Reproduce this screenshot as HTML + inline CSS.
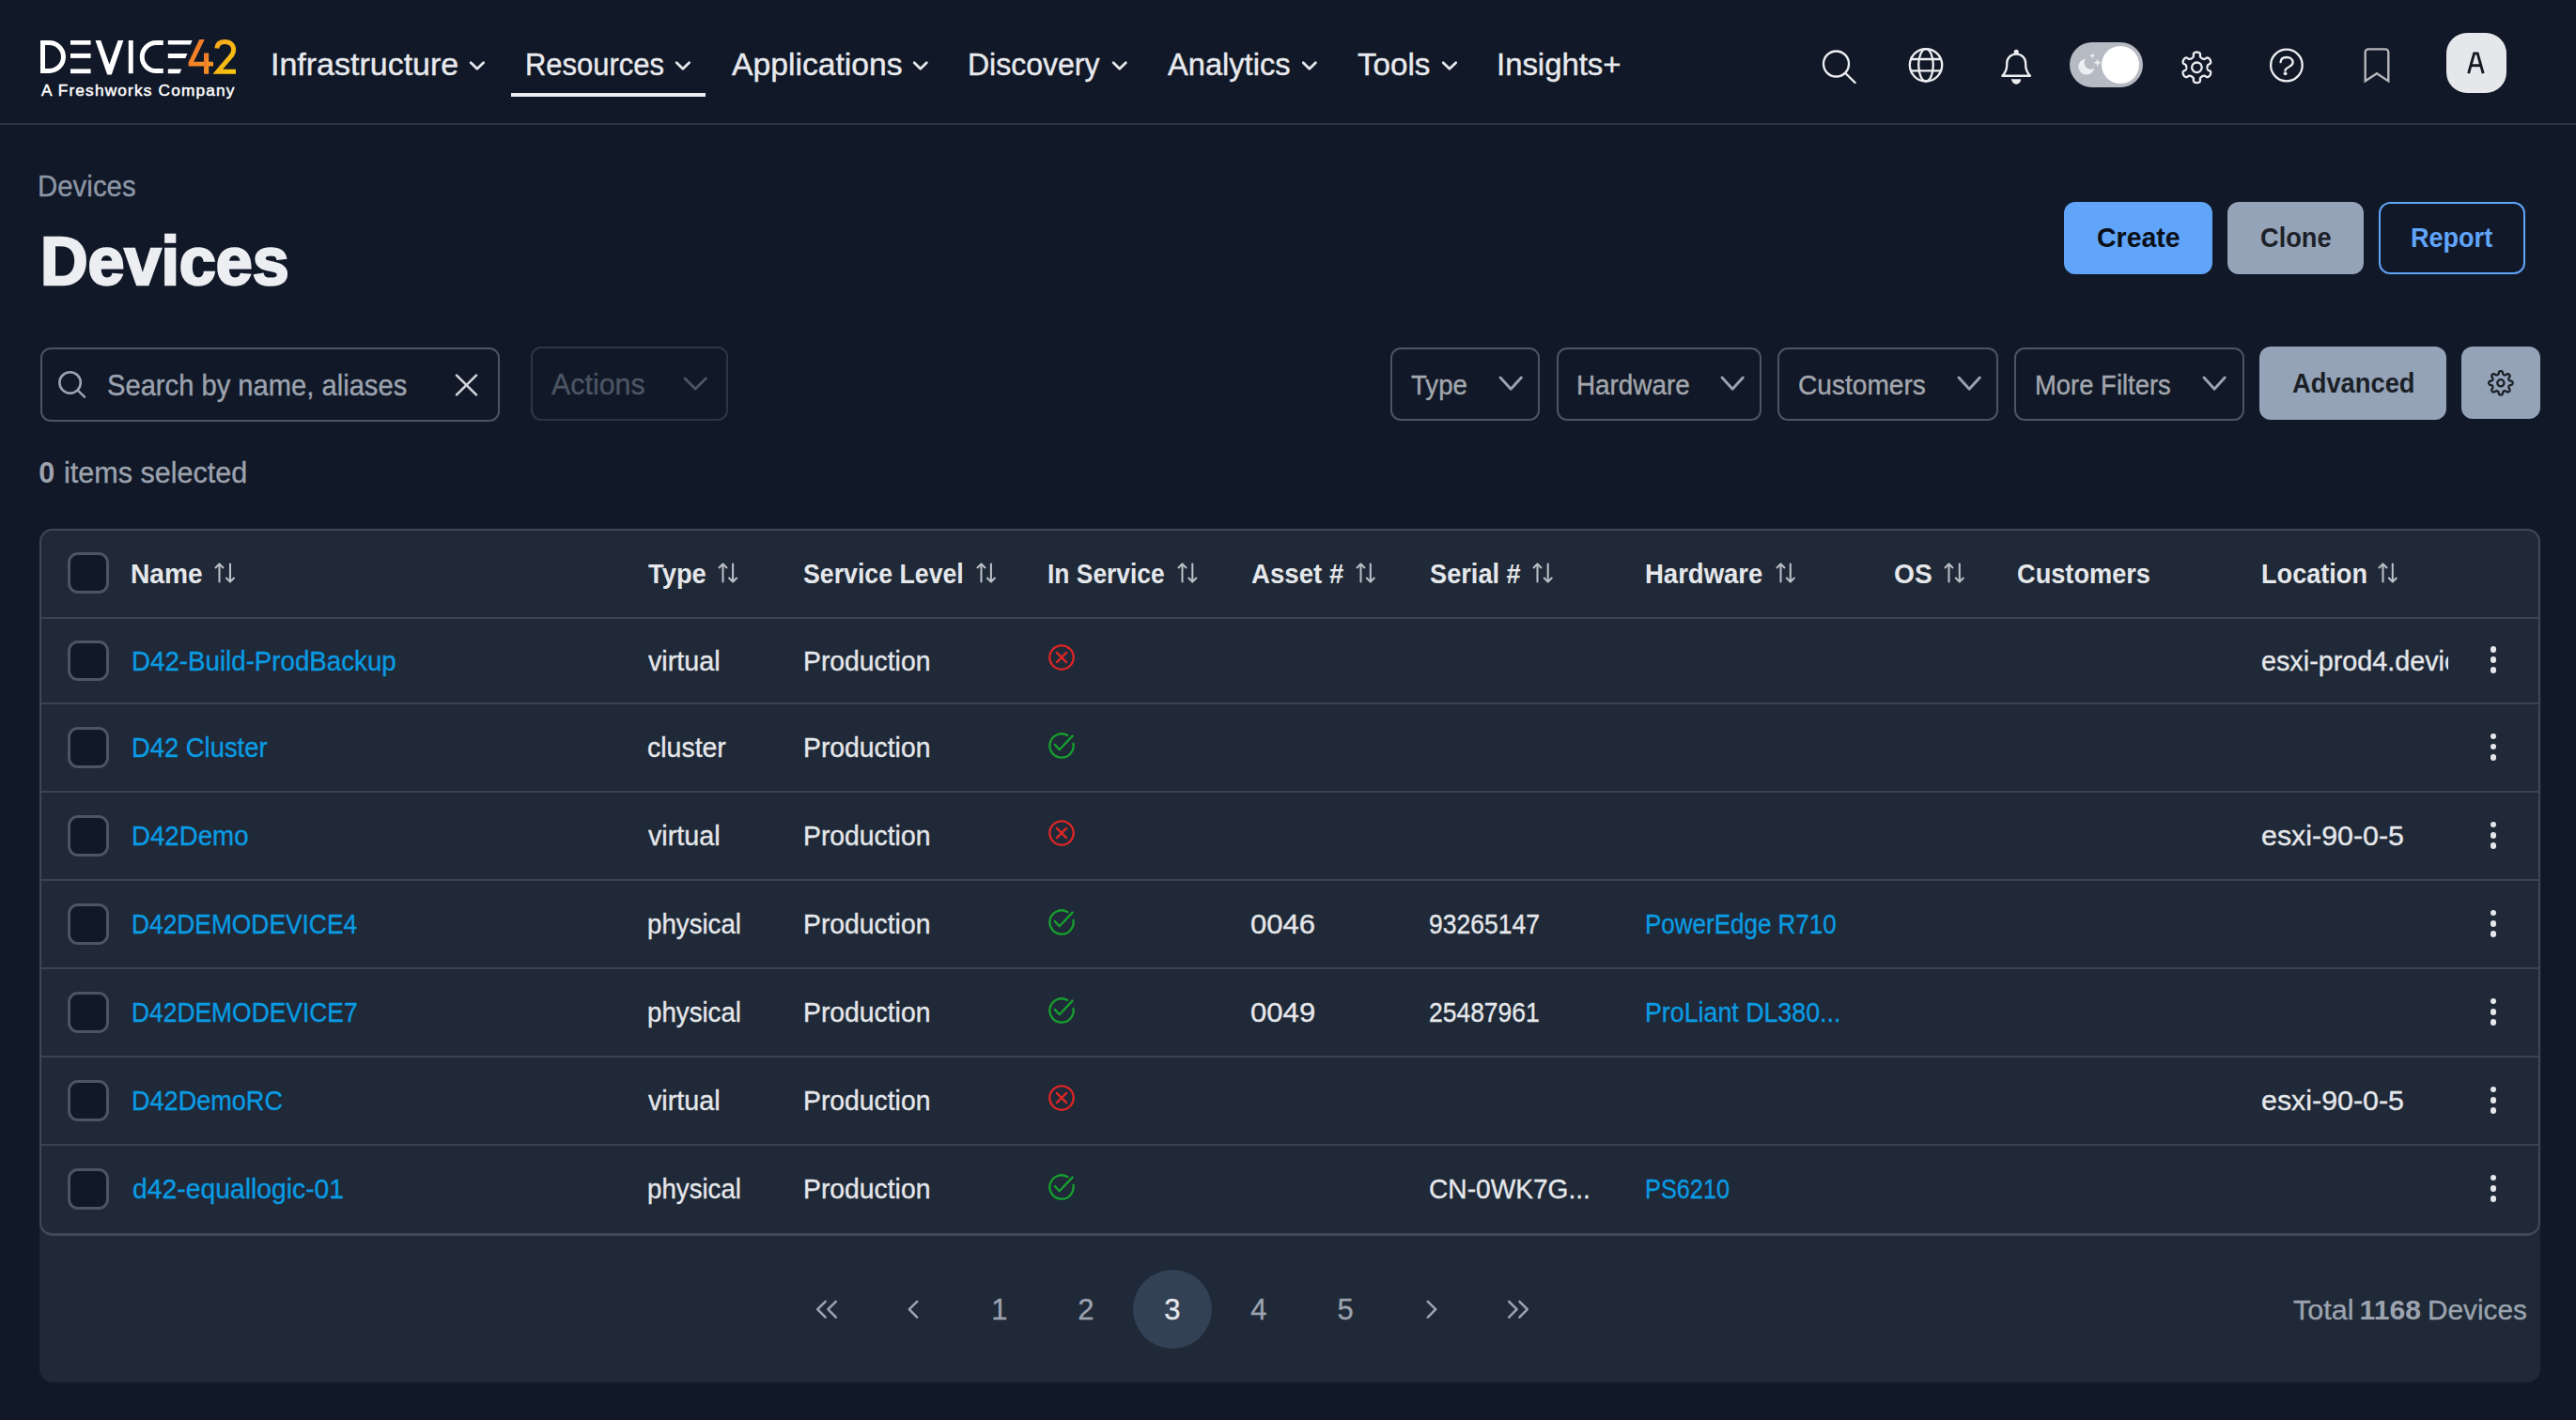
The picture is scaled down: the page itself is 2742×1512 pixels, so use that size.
<!DOCTYPE html><html><head><meta charset="utf-8"><title>Devices</title><style>html,body{margin:0;padding:0;}body{width:2742px;height:1512px;overflow:hidden;background:#111827;position:relative;font-family:"Liberation Sans",sans-serif;}.t{position:absolute;white-space:nowrap;line-height:1;transform-origin:0 0;}</style></head><body>
<div style="position:absolute;left:0;top:131px;width:2742px;height:2px;background:#2c3340"></div>
<svg style="position:absolute;left:0;top:0" width="300" height="120" viewBox="0 0 300 120">
<defs>
<linearGradient id="g4" x1="0" y1="0" x2="1" y2="1"><stop offset="0" stop-color="#ef6f2a"/><stop offset="1" stop-color="#f59a23"/></linearGradient>
<linearGradient id="g2" x1="0" y1="0" x2="1" y2="1"><stop offset="0" stop-color="#f6a91c"/><stop offset="1" stop-color="#f8c70f"/></linearGradient>
</defs>
<g fill="#ffffff">
<path d="M45.5,45.5 H52.5 A15,15 0 0 1 52.5,75.5 H45.5 Z" fill="none" stroke="#fff" stroke-width="5"/>
<rect x="75" y="43" width="21.6" height="4.7"/>
<rect x="75" y="56.9" width="21.6" height="5"/>
<rect x="75" y="73.4" width="21.6" height="4.8"/>
<polygon points="101.5,43 107.3,43 116.4,68.5 125.6,43 131.4,43 118.8,79.5 114.2,79.5"/>
<rect x="136.8" y="43" width="4.9" height="35.2"/>
<path d="M173.8,45.5 H166.3 A15,15 0 0 0 166.3,75.6 H173.8" fill="none" stroke="#fff" stroke-width="5"/>
<polygon points="178.8,43 204.6,43 202.8,47.6 178.8,47.6"/>
<polygon points="178.8,56.9 199.4,56.9 197.4,62 178.8,62"/>
<polygon points="178.8,73.4 193.2,73.4 191.3,78.2 178.8,78.2"/>
</g>
<g fill="url(#g4)">
<polygon points="212.2,42 217.8,42 206.2,65.8 227,65.8 227,70.6 200.6,70.6 200.6,66.5"/>
<rect x="217" y="56.5" width="5.2" height="22.2"/>
</g>
<path d="M230.8,51.5 C231.2,46.5 235,44.5 239.6,44.5 C245,44.5 248.6,48 248.6,53 C248.6,56.8 246.8,59.2 243.6,62.4 L231.8,76.2 H251" fill="none" stroke="url(#g2)" stroke-width="5" stroke-linejoin="miter"/>
</svg>
<svg style="position:absolute;left:498.6px;top:64px" width="17.799999999999955" height="13" viewBox="498.6 64 17.799999999999955 13"><polyline points="500.8,66.8 507.5,73.2 514.1999999999999,66.8" fill="none" stroke="#e5e7eb" stroke-width="2.8" stroke-linecap="round" stroke-linejoin="round"/></svg>
<svg style="position:absolute;left:718.3px;top:64px" width="17.800000000000068" height="13" viewBox="718.3 64 17.800000000000068 13"><polyline points="720.5,66.8 727.2,73.2 733.9,66.8" fill="none" stroke="#e5e7eb" stroke-width="2.8" stroke-linecap="round" stroke-linejoin="round"/></svg>
<svg style="position:absolute;left:971.3px;top:64px" width="17.5" height="13" viewBox="971.3 64 17.5 13"><polyline points="973.5,66.8 980.05,73.2 986.5999999999999,66.8" fill="none" stroke="#e5e7eb" stroke-width="2.8" stroke-linecap="round" stroke-linejoin="round"/></svg>
<svg style="position:absolute;left:1182.9px;top:64px" width="17.5" height="13" viewBox="1182.9 64 17.5 13"><polyline points="1185.1000000000001,66.8 1191.65,73.2 1198.2,66.8" fill="none" stroke="#e5e7eb" stroke-width="2.8" stroke-linecap="round" stroke-linejoin="round"/></svg>
<svg style="position:absolute;left:1385.0px;top:64px" width="17.59999999999991" height="13" viewBox="1385.0 64 17.59999999999991 13"><polyline points="1387.2,66.8 1393.8,73.2 1400.3999999999999,66.8" fill="none" stroke="#e5e7eb" stroke-width="2.8" stroke-linecap="round" stroke-linejoin="round"/></svg>
<svg style="position:absolute;left:1533.9px;top:64px" width="17.899999999999864" height="13" viewBox="1533.9 64 17.899999999999864 13"><polyline points="1536.1000000000001,66.8 1542.85,73.2 1549.6,66.8" fill="none" stroke="#e5e7eb" stroke-width="2.8" stroke-linecap="round" stroke-linejoin="round"/></svg>
<div style="position:absolute;left:544px;top:99px;width:207px;height:4px;background:#eceef2"></div>
<svg style="position:absolute;left:1900px;top:20px" width="842" height="100" viewBox="1900 20 842 100" fill="none" stroke="#eceef1" stroke-width="2.35" stroke-linecap="round" stroke-linejoin="round">
<circle cx="1954.5" cy="68" r="13.5"/>
<line x1="1964.4" y1="78" x2="1974.6" y2="88"/>
<circle cx="2050" cy="69.3" r="17.2"/>
<ellipse cx="2050" cy="69.3" rx="7.8" ry="17.2"/>
<line x1="2034.2" y1="63" x2="2065.8" y2="63"/>
<line x1="2034.2" y1="75.4" x2="2065.8" y2="75.4"/>
<path d="M2131.4,80.7 C2134.6,77.4 2136.2,74 2136.2,69.2 V67.4 C2136.2,61.6 2140.5,57.6 2146.2,57.6 C2151.9,57.6 2156.2,61.6 2156.2,67.4 V69.2 C2156.2,74 2157.8,77.4 2161,80.7 Z"/>
<circle cx="2146.2" cy="55.2" r="1.4" fill="#eceef1"/>
<path d="M2141.6,84.7 H2150.8 A4.6,4.6 0 0 1 2141.6,84.7 Z" fill="#eceef1" stroke-width="0.8"/>
<path d="M2349.50,71.80 L2349.51,72.09 L2349.53,72.38 L2349.57,72.68 L2349.62,72.98 L2349.70,73.29 L2349.80,73.61 L2349.93,73.94 L2350.11,74.29 L2350.40,74.68 L2351.63,75.35 L2352.84,76.08 L2353.07,76.57 L2353.17,77.03 L2353.21,77.48 L2353.18,77.92 L2353.12,78.35 L2353.02,78.77 L2352.88,79.18 L2352.71,79.57 L2352.52,79.95 L2352.29,80.31 L2352.03,80.65 L2351.75,80.97 L2351.44,81.27 L2351.10,81.54 L2350.72,81.78 L2350.32,81.98 L2349.86,82.12 L2349.32,82.17 L2348.09,81.49 L2346.90,80.75 L2346.41,80.70 L2346.02,80.72 L2345.66,80.77 L2345.34,80.84 L2345.03,80.93 L2344.75,81.03 L2344.47,81.15 L2344.21,81.27 L2343.95,81.41 L2343.70,81.56 L2343.46,81.73 L2343.22,81.91 L2342.99,82.11 L2342.76,82.33 L2342.54,82.57 L2342.31,82.86 L2342.10,83.19 L2341.91,83.63 L2341.95,85.03 L2341.92,86.44 L2341.61,86.89 L2341.26,87.21 L2340.88,87.46 L2340.49,87.67 L2340.08,87.83 L2339.67,87.95 L2339.25,88.03 L2338.83,88.08 L2338.40,88.10 L2337.97,88.08 L2337.55,88.03 L2337.13,87.95 L2336.72,87.83 L2336.31,87.67 L2335.92,87.46 L2335.54,87.21 L2335.19,86.89 L2334.88,86.44 L2334.85,85.03 L2334.89,83.63 L2334.70,83.19 L2334.49,82.86 L2334.26,82.57 L2334.04,82.33 L2333.81,82.11 L2333.58,81.91 L2333.34,81.73 L2333.10,81.56 L2332.85,81.41 L2332.59,81.27 L2332.33,81.15 L2332.05,81.03 L2331.77,80.93 L2331.46,80.84 L2331.14,80.77 L2330.78,80.72 L2330.39,80.70 L2329.90,80.75 L2328.71,81.49 L2327.48,82.17 L2326.94,82.12 L2326.48,81.98 L2326.08,81.78 L2325.70,81.54 L2325.36,81.27 L2325.05,80.97 L2324.77,80.65 L2324.51,80.31 L2324.28,79.95 L2324.09,79.57 L2323.92,79.18 L2323.78,78.77 L2323.68,78.35 L2323.62,77.92 L2323.59,77.48 L2323.63,77.03 L2323.73,76.57 L2323.96,76.08 L2325.17,75.35 L2326.40,74.68 L2326.69,74.29 L2326.87,73.94 L2327.00,73.61 L2327.10,73.29 L2327.18,72.98 L2327.23,72.68 L2327.27,72.38 L2327.29,72.09 L2327.30,71.80 L2327.29,71.51 L2327.27,71.22 L2327.23,70.92 L2327.18,70.62 L2327.10,70.31 L2327.00,69.99 L2326.87,69.66 L2326.69,69.31 L2326.40,68.92 L2325.17,68.25 L2323.96,67.52 L2323.73,67.03 L2323.63,66.57 L2323.59,66.12 L2323.62,65.68 L2323.68,65.25 L2323.78,64.83 L2323.92,64.42 L2324.09,64.03 L2324.28,63.65 L2324.51,63.29 L2324.77,62.95 L2325.05,62.63 L2325.36,62.33 L2325.70,62.06 L2326.08,61.82 L2326.48,61.62 L2326.94,61.48 L2327.48,61.43 L2328.71,62.11 L2329.90,62.85 L2330.39,62.90 L2330.78,62.88 L2331.14,62.83 L2331.46,62.76 L2331.77,62.67 L2332.05,62.57 L2332.33,62.45 L2332.59,62.33 L2332.85,62.19 L2333.10,62.04 L2333.34,61.87 L2333.58,61.69 L2333.81,61.49 L2334.04,61.27 L2334.26,61.03 L2334.49,60.74 L2334.70,60.41 L2334.89,59.97 L2334.85,58.57 L2334.88,57.16 L2335.19,56.71 L2335.54,56.39 L2335.92,56.14 L2336.31,55.93 L2336.72,55.77 L2337.13,55.65 L2337.55,55.57 L2337.97,55.52 L2338.40,55.50 L2338.83,55.52 L2339.25,55.57 L2339.67,55.65 L2340.08,55.77 L2340.49,55.93 L2340.88,56.14 L2341.26,56.39 L2341.61,56.71 L2341.92,57.16 L2341.95,58.57 L2341.91,59.97 L2342.10,60.41 L2342.31,60.74 L2342.54,61.03 L2342.76,61.27 L2342.99,61.49 L2343.22,61.69 L2343.46,61.87 L2343.70,62.04 L2343.95,62.19 L2344.21,62.33 L2344.47,62.45 L2344.75,62.57 L2345.03,62.67 L2345.34,62.76 L2345.66,62.83 L2346.02,62.88 L2346.41,62.90 L2346.90,62.85 L2348.09,62.11 L2349.32,61.43 L2349.86,61.48 L2350.32,61.62 L2350.72,61.82 L2351.10,62.06 L2351.44,62.33 L2351.75,62.63 L2352.03,62.95 L2352.29,63.29 L2352.52,63.65 L2352.71,64.03 L2352.88,64.42 L2353.02,64.83 L2353.12,65.25 L2353.18,65.68 L2353.21,66.12 L2353.17,66.57 L2353.07,67.03 L2352.84,67.52 L2351.63,68.25 L2350.40,68.92 L2350.11,69.31 L2349.93,69.66 L2349.80,69.99 L2349.70,70.31 L2349.62,70.62 L2349.57,70.92 L2349.53,71.22 L2349.51,71.51 Z" stroke-width="2.3"/>
<circle cx="2338.4" cy="71.8" r="5.3" stroke-width="2.3"/>
<circle cx="2433.9" cy="69.5" r="16.8" stroke-width="2.3"/>
<path d="M2427.6,66.2 C2427.8,62.8 2430.4,61 2434,61 C2437.8,61 2440.6,63.2 2440.6,66.4 C2440.6,70 2436.6,70.6 2433.6,73.2 C2432.6,74.2 2432.4,74.8 2432.4,75.4" stroke-width="2.3"/>
<circle cx="2432.6" cy="78.3" r="1.9" fill="#eceef1" stroke="none"/>
<path d="M2517.7,86.3 V55.6 A3.2,3.2 0 0 1 2520.9,52.4 H2539.1 A3.2,3.2 0 0 1 2542.3,55.6 V86.3 L2530,78.2 Z" stroke="#b4b6ba" stroke-width="2.4" stroke-linecap="butt" stroke-linejoin="miter"/>
</svg>
<div style="position:absolute;left:2203px;top:44.9px;width:78px;height:48px;border-radius:24px;background:#b6bac2"></div>
<div style="position:absolute;left:2237px;top:48.7px;width:40.3px;height:40.3px;border-radius:20.15px;background:#ffffff"></div>
<svg style="position:absolute;left:2203px;top:44px" width="40" height="50" viewBox="2203 44 40 50">
<circle cx="2220.9" cy="71.0" r="8.6" fill="#eceef1"/><circle cx="2225.6" cy="66.8" r="7.0" fill="#b6bac2"/>
<path d="M2227.2,55.9 L2228,58.6 L2230.7,59.4 L2228,60.2 L2227.2,62.9 L2226.4,60.2 L2223.7,59.4 L2226.4,58.6 Z" fill="#eceef1"/>
<path d="M2232.6,62.2 L2233.7,65.6 L2237.1,66.7 L2233.7,67.8 L2232.6,71.2 L2231.5,67.8 L2228.1,66.7 L2231.5,65.6 Z" fill="#eceef1"/>
</svg>
<div style="position:absolute;left:2604px;top:34.7px;width:64px;height:64.2px;border-radius:22px;background:#e5e7eb"></div>
<svg style="position:absolute;left:2620px;top:50px" width="32" height="34" viewBox="2620 50 32 34" fill="none" stroke="#15181e" stroke-width="2.9" stroke-linejoin="miter">
<path d="M2627.6,78.2 L2633.6,56.9 H2637.2 L2643.2,78.2"/><line x1="2630.2" y1="69.7" x2="2640.6" y2="69.7"/></svg>
<div style="position:absolute;left:2197px;top:214.8px;width:158px;height:77px;border-radius:12px;background:#60a5fa"></div>
<div style="position:absolute;left:2371px;top:214.8px;width:145px;height:77px;border-radius:12px;background:#94a3b8"></div>
<div style="position:absolute;left:2532px;top:214.8px;width:156px;height:77px;border-radius:12px;border:2.4px solid #60a5fa;box-sizing:border-box"></div>
<div style="position:absolute;left:42.5px;top:369.8px;width:489.2px;height:79.5px;border-radius:11px;border:2px solid #4b5563;box-sizing:border-box"></div>
<svg style="position:absolute;left:55px;top:388px" width="45" height="45" viewBox="55 388 45 45" fill="none" stroke="#9ca3af" stroke-width="2.6" stroke-linecap="round">
<circle cx="74.6" cy="407.4" r="11.2"/><line x1="82.8" y1="415.6" x2="90" y2="422.6"/></svg>
<svg style="position:absolute;left:480px;top:393px" width="34" height="34" viewBox="480 393 34 34" fill="none" stroke="#d1d5db" stroke-width="2.6" stroke-linecap="round">
<line x1="486" y1="399.6" x2="507" y2="420.4"/><line x1="507" y1="399.6" x2="486" y2="420.4"/></svg>
<div style="position:absolute;left:564.6px;top:369px;width:210px;height:79px;border-radius:11px;border:2px solid #2e3644;box-sizing:border-box"></div>
<svg style="position:absolute;left:724.6px;top:399px" width="30.399999999999977" height="19" viewBox="724.6 399 30.399999999999977 19"><polyline points="728.6,403 739.8,414 751,403" fill="none" stroke="#4b5563" stroke-width="2.9" stroke-linecap="round" stroke-linejoin="round"/></svg>
<div style="position:absolute;left:1480px;top:369.5px;width:159px;height:78.5px;border-radius:11px;border:2px solid #4b5563;box-sizing:border-box"></div>
<svg style="position:absolute;left:1592.9px;top:398.4px" width="30.399999999999864" height="20.200000000000045" viewBox="1592.9 398.4 30.399999999999864 20.200000000000045"><polyline points="1596.9,402.4 1608.1,414.6 1619.3,402.4" fill="none" stroke="#9ca3af" stroke-width="2.9" stroke-linecap="round" stroke-linejoin="round"/></svg>
<div style="position:absolute;left:1656.5px;top:369.5px;width:218.5px;height:78.5px;border-radius:11px;border:2px solid #4b5563;box-sizing:border-box"></div>
<svg style="position:absolute;left:1828.7px;top:398.4px" width="30.299999999999955" height="20.200000000000045" viewBox="1828.7 398.4 30.299999999999955 20.200000000000045"><polyline points="1832.7,402.4 1843.85,414.6 1855,402.4" fill="none" stroke="#9ca3af" stroke-width="2.9" stroke-linecap="round" stroke-linejoin="round"/></svg>
<div style="position:absolute;left:1892px;top:369.5px;width:235px;height:78.5px;border-radius:11px;border:2px solid #4b5563;box-sizing:border-box"></div>
<svg style="position:absolute;left:2080.6px;top:398.4px" width="30.40000000000009" height="20.200000000000045" viewBox="2080.6 398.4 30.40000000000009 20.200000000000045"><polyline points="2084.6,402.4 2095.8,414.6 2107,402.4" fill="none" stroke="#9ca3af" stroke-width="2.9" stroke-linecap="round" stroke-linejoin="round"/></svg>
<div style="position:absolute;left:2144px;top:369.5px;width:244.5999999999999px;height:78.5px;border-radius:11px;border:2px solid #4b5563;box-sizing:border-box"></div>
<svg style="position:absolute;left:2342px;top:398.4px" width="30.199999999999818" height="20.200000000000045" viewBox="2342 398.4 30.199999999999818 20.200000000000045"><polyline points="2346,402.4 2357.1,414.6 2368.2,402.4" fill="none" stroke="#9ca3af" stroke-width="2.9" stroke-linecap="round" stroke-linejoin="round"/></svg>
<div style="position:absolute;left:2404.8px;top:369px;width:199.2px;height:77.7px;border-radius:12px;background:#94a3b8"></div>
<div style="position:absolute;left:2620px;top:369px;width:84px;height:76.7px;border-radius:12px;background:#94a3b8"></div>
<svg style="position:absolute;left:2640px;top:386px" width="44" height="44" viewBox="2640 386 44 44" fill="none" stroke="#1c2027" stroke-width="2.3" stroke-linejoin="round">
<path d="M2674.65,407.80 L2674.62,408.13 L2674.55,408.46 L2674.42,408.79 L2674.24,409.10 L2673.99,409.39 L2673.67,409.66 L2673.21,409.90 L2672.17,409.98 L2671.70,410.15 L2671.37,410.34 L2671.10,410.53 L2670.88,410.72 L2670.70,410.92 L2670.56,411.12 L2670.45,411.34 L2670.37,411.57 L2670.33,411.82 L2670.31,412.09 L2670.33,412.38 L2670.39,412.70 L2670.50,413.07 L2670.70,413.52 L2671.38,414.32 L2671.54,414.80 L2671.58,415.22 L2671.54,415.61 L2671.45,415.96 L2671.31,416.27 L2671.13,416.56 L2670.92,416.82 L2670.66,417.03 L2670.37,417.21 L2670.06,417.35 L2669.71,417.44 L2669.32,417.48 L2668.90,417.44 L2668.42,417.28 L2667.62,416.60 L2667.17,416.40 L2666.80,416.29 L2666.48,416.23 L2666.19,416.21 L2665.92,416.23 L2665.67,416.27 L2665.44,416.35 L2665.22,416.46 L2665.02,416.60 L2664.82,416.78 L2664.63,417.00 L2664.44,417.27 L2664.25,417.60 L2664.08,418.07 L2664.00,419.11 L2663.76,419.57 L2663.49,419.89 L2663.20,420.14 L2662.89,420.32 L2662.56,420.45 L2662.23,420.52 L2661.90,420.55 L2661.57,420.52 L2661.24,420.45 L2660.91,420.32 L2660.60,420.14 L2660.31,419.89 L2660.04,419.57 L2659.80,419.11 L2659.72,418.07 L2659.55,417.60 L2659.36,417.27 L2659.17,417.00 L2658.98,416.78 L2658.78,416.60 L2658.58,416.46 L2658.36,416.35 L2658.13,416.27 L2657.88,416.23 L2657.61,416.21 L2657.32,416.23 L2657.00,416.29 L2656.63,416.40 L2656.18,416.60 L2655.38,417.28 L2654.90,417.44 L2654.48,417.48 L2654.09,417.44 L2653.74,417.35 L2653.43,417.21 L2653.14,417.03 L2652.88,416.82 L2652.67,416.56 L2652.49,416.27 L2652.35,415.96 L2652.26,415.61 L2652.22,415.22 L2652.26,414.80 L2652.42,414.32 L2653.10,413.52 L2653.30,413.07 L2653.41,412.70 L2653.47,412.38 L2653.49,412.09 L2653.47,411.82 L2653.43,411.57 L2653.35,411.34 L2653.24,411.12 L2653.10,410.92 L2652.92,410.72 L2652.70,410.53 L2652.43,410.34 L2652.10,410.15 L2651.63,409.98 L2650.59,409.90 L2650.13,409.66 L2649.81,409.39 L2649.56,409.10 L2649.38,408.79 L2649.25,408.46 L2649.18,408.13 L2649.15,407.80 L2649.18,407.47 L2649.25,407.14 L2649.38,406.81 L2649.56,406.50 L2649.81,406.21 L2650.13,405.94 L2650.59,405.70 L2651.63,405.62 L2652.10,405.45 L2652.43,405.26 L2652.70,405.07 L2652.92,404.88 L2653.10,404.68 L2653.24,404.48 L2653.35,404.26 L2653.43,404.03 L2653.47,403.78 L2653.49,403.51 L2653.47,403.22 L2653.41,402.90 L2653.30,402.53 L2653.10,402.08 L2652.42,401.28 L2652.26,400.80 L2652.22,400.38 L2652.26,399.99 L2652.35,399.64 L2652.49,399.33 L2652.67,399.04 L2652.88,398.78 L2653.14,398.57 L2653.43,398.39 L2653.74,398.25 L2654.09,398.16 L2654.48,398.12 L2654.90,398.16 L2655.38,398.32 L2656.18,399.00 L2656.63,399.20 L2657.00,399.31 L2657.32,399.37 L2657.61,399.39 L2657.88,399.37 L2658.13,399.33 L2658.36,399.25 L2658.58,399.14 L2658.78,399.00 L2658.98,398.82 L2659.17,398.60 L2659.36,398.33 L2659.55,398.00 L2659.72,397.53 L2659.80,396.49 L2660.04,396.03 L2660.31,395.71 L2660.60,395.46 L2660.91,395.28 L2661.24,395.15 L2661.57,395.08 L2661.90,395.05 L2662.23,395.08 L2662.56,395.15 L2662.89,395.28 L2663.20,395.46 L2663.49,395.71 L2663.76,396.03 L2664.00,396.49 L2664.08,397.53 L2664.25,398.00 L2664.44,398.33 L2664.63,398.60 L2664.82,398.82 L2665.02,399.00 L2665.22,399.14 L2665.44,399.25 L2665.67,399.33 L2665.92,399.37 L2666.19,399.39 L2666.48,399.37 L2666.80,399.31 L2667.17,399.20 L2667.62,399.00 L2668.42,398.32 L2668.90,398.16 L2669.32,398.12 L2669.71,398.16 L2670.06,398.25 L2670.37,398.39 L2670.66,398.57 L2670.92,398.78 L2671.13,399.04 L2671.31,399.33 L2671.45,399.64 L2671.54,399.99 L2671.58,400.38 L2671.54,400.80 L2671.38,401.28 L2670.70,402.08 L2670.50,402.53 L2670.39,402.90 L2670.33,403.22 L2670.31,403.51 L2670.33,403.78 L2670.37,404.03 L2670.45,404.26 L2670.56,404.48 L2670.70,404.68 L2670.88,404.88 L2671.10,405.07 L2671.37,405.26 L2671.70,405.45 L2672.17,405.62 L2673.21,405.70 L2673.67,405.94 L2673.99,406.21 L2674.24,406.50 L2674.42,406.81 L2674.55,407.14 L2674.62,407.47 Z"/>
<circle cx="2661.9" cy="407.8" r="3.6"/></svg>
<div style="position:absolute;left:42px;top:562.7px;width:2662px;height:909px;border-radius:14px;background:#1f2937"></div>
<div style="position:absolute;left:42px;top:562.7px;width:2662px;height:753.5px;border-radius:14px;border:2px solid #414854;border-bottom-width:3.6px;box-sizing:border-box"></div>
<div style="position:absolute;left:44px;top:657px;width:2658px;height:2px;background:#3c4350"></div>
<div style="position:absolute;left:44px;top:747.8px;width:2658px;height:2px;background:#3c4350"></div>
<div style="position:absolute;left:44px;top:842px;width:2658px;height:2px;background:#3c4350"></div>
<div style="position:absolute;left:44px;top:936px;width:2658px;height:2px;background:#3c4350"></div>
<div style="position:absolute;left:44px;top:1030px;width:2658px;height:2px;background:#3c4350"></div>
<div style="position:absolute;left:44px;top:1124px;width:2658px;height:2px;background:#3c4350"></div>
<div style="position:absolute;left:44px;top:1218px;width:2658px;height:2px;background:#3c4350"></div>
<div style="position:absolute;left:72.3px;top:588.1px;width:43.4px;height:43.6px;border-radius:11px;border:3.4px solid #4b5563;background:#111827;box-sizing:border-box"></div>
<svg style="position:absolute;left:225.8px;top:596px" width="26.19999999999999" height="28" viewBox="225.8 596 26.19999999999999 28" fill="none" stroke="#bcc0c7" stroke-width="2.05" stroke-linecap="round" stroke-linejoin="round">
<polyline points="229.3,604.4 233.3,600.5 237.3,604.4"/><line x1="233.3" y1="600.8" x2="233.3" y2="619.4"/>
<polyline points="240.8,615.5 244.8,619.4 248.8,615.5"/><line x1="244.8" y1="600.6" x2="244.8" y2="619.1"/></svg>
<svg style="position:absolute;left:762.4px;top:596px" width="25.300000000000068" height="28" viewBox="762.4 596 25.300000000000068 28" fill="none" stroke="#bcc0c7" stroke-width="2.05" stroke-linecap="round" stroke-linejoin="round">
<polyline points="765.9,604.4 769.9,600.5 773.9,604.4"/><line x1="769.9" y1="600.8" x2="769.9" y2="619.4"/>
<polyline points="776.5,615.5 780.5,619.4 784.5,615.5"/><line x1="780.5" y1="600.6" x2="780.5" y2="619.1"/></svg>
<svg style="position:absolute;left:1036.5px;top:596px" width="25.09999999999991" height="28" viewBox="1036.5 596 25.09999999999991 28" fill="none" stroke="#bcc0c7" stroke-width="2.05" stroke-linecap="round" stroke-linejoin="round">
<polyline points="1040.0,604.4 1044.0,600.5 1048.0,604.4"/><line x1="1044.0" y1="600.8" x2="1044.0" y2="619.4"/>
<polyline points="1050.3999999999999,615.5 1054.3999999999999,619.4 1058.3999999999999,615.5"/><line x1="1054.3999999999999" y1="600.6" x2="1054.3999999999999" y2="619.1"/></svg>
<svg style="position:absolute;left:1251px;top:596px" width="25.5" height="28" viewBox="1251 596 25.5 28" fill="none" stroke="#bcc0c7" stroke-width="2.05" stroke-linecap="round" stroke-linejoin="round">
<polyline points="1254.5,604.4 1258.5,600.5 1262.5,604.4"/><line x1="1258.5" y1="600.8" x2="1258.5" y2="619.4"/>
<polyline points="1265.3,615.5 1269.3,619.4 1273.3,615.5"/><line x1="1269.3" y1="600.6" x2="1269.3" y2="619.1"/></svg>
<svg style="position:absolute;left:1441px;top:596px" width="25" height="28" viewBox="1441 596 25 28" fill="none" stroke="#bcc0c7" stroke-width="2.05" stroke-linecap="round" stroke-linejoin="round">
<polyline points="1444.5,604.4 1448.5,600.5 1452.5,604.4"/><line x1="1448.5" y1="600.8" x2="1448.5" y2="619.4"/>
<polyline points="1454.8,615.5 1458.8,619.4 1462.8,615.5"/><line x1="1458.8" y1="600.6" x2="1458.8" y2="619.1"/></svg>
<svg style="position:absolute;left:1628.7px;top:596px" width="25.899999999999864" height="28" viewBox="1628.7 596 25.899999999999864 28" fill="none" stroke="#bcc0c7" stroke-width="2.05" stroke-linecap="round" stroke-linejoin="round">
<polyline points="1632.2,604.4 1636.2,600.5 1640.2,604.4"/><line x1="1636.2" y1="600.8" x2="1636.2" y2="619.4"/>
<polyline points="1643.3999999999999,615.5 1647.3999999999999,619.4 1651.3999999999999,615.5"/><line x1="1647.3999999999999" y1="600.6" x2="1647.3999999999999" y2="619.1"/></svg>
<svg style="position:absolute;left:1887.6px;top:596px" width="25.0" height="28" viewBox="1887.6 596 25.0 28" fill="none" stroke="#bcc0c7" stroke-width="2.05" stroke-linecap="round" stroke-linejoin="round">
<polyline points="1891.1,604.4 1895.1,600.5 1899.1,604.4"/><line x1="1895.1" y1="600.8" x2="1895.1" y2="619.4"/>
<polyline points="1901.3999999999999,615.5 1905.3999999999999,619.4 1909.3999999999999,615.5"/><line x1="1905.3999999999999" y1="600.6" x2="1905.3999999999999" y2="619.1"/></svg>
<svg style="position:absolute;left:2067px;top:596px" width="26" height="28" viewBox="2067 596 26 28" fill="none" stroke="#bcc0c7" stroke-width="2.05" stroke-linecap="round" stroke-linejoin="round">
<polyline points="2070.5,604.4 2074.5,600.5 2078.5,604.4"/><line x1="2074.5" y1="600.8" x2="2074.5" y2="619.4"/>
<polyline points="2081.8,615.5 2085.8,619.4 2089.8,615.5"/><line x1="2085.8" y1="600.6" x2="2085.8" y2="619.1"/></svg>
<svg style="position:absolute;left:2529px;top:596px" width="25" height="28" viewBox="2529 596 25 28" fill="none" stroke="#bcc0c7" stroke-width="2.05" stroke-linecap="round" stroke-linejoin="round">
<polyline points="2532.5,604.4 2536.5,600.5 2540.5,604.4"/><line x1="2536.5" y1="600.8" x2="2536.5" y2="619.4"/>
<polyline points="2542.8,615.5 2546.8,619.4 2550.8,615.5"/><line x1="2546.8" y1="600.6" x2="2546.8" y2="619.1"/></svg>
<div style="position:absolute;left:72.3px;top:681.6px;width:43.4px;height:43.6px;border-radius:11px;border:3.4px solid #4b5563;background:#111827;box-sizing:border-box"></div>
<div style="position:absolute;left:2400px;top:678.4px;width:205.5px;height:50px;overflow:hidden"><div class="t" style="left:6.8px;top:11.28px;font-size:29.2px;color:#e5e7eb;transform:scaleX(0.985);-webkit-text-stroke:0.35px">esxi-prod4.device42.pvt</div></div>
<svg style="position:absolute;left:1112.0px;top:682.1999999999999px" width="36" height="36" viewBox="-18 -18 36 36" fill="none" stroke="#dc2626" stroke-width="2.35" stroke-linecap="round"><circle cx="0" cy="0" r="12.7"/><line x1="-5.1" y1="-5.1" x2="5.1" y2="5.1"/><line x1="5.1" y1="-5.1" x2="-5.1" y2="5.1"/></svg>
<div style="position:absolute;left:2650.7px;top:688.10px;width:6.8px;height:6.8px;border-radius:3.4px;background:#e5e7eb"></div>
<div style="position:absolute;left:2650.7px;top:699.20px;width:6.8px;height:6.8px;border-radius:3.4px;background:#e5e7eb"></div>
<div style="position:absolute;left:2650.7px;top:710.30px;width:6.8px;height:6.8px;border-radius:3.4px;background:#e5e7eb"></div>
<div style="position:absolute;left:72.3px;top:774.1px;width:43.4px;height:43.6px;border-radius:11px;border:3.4px solid #4b5563;background:#111827;box-sizing:border-box"></div>
<svg style="position:absolute;left:1112.0px;top:775.5px" width="36" height="36" viewBox="-18 -18 36 36" fill="none" stroke="#179e2e" stroke-width="2.35" stroke-linecap="round" stroke-linejoin="round"><path d="M12.45,-2.2 A12.65,12.65 0 1 1 6.3,-10.95"/><polyline points="-7.2,-1.1 -2.3,4.3 11.6,-10.4"/></svg>
<div style="position:absolute;left:2650.7px;top:780.60px;width:6.8px;height:6.8px;border-radius:3.4px;background:#e5e7eb"></div>
<div style="position:absolute;left:2650.7px;top:791.70px;width:6.8px;height:6.8px;border-radius:3.4px;background:#e5e7eb"></div>
<div style="position:absolute;left:2650.7px;top:802.80px;width:6.8px;height:6.8px;border-radius:3.4px;background:#e5e7eb"></div>
<div style="position:absolute;left:72.3px;top:868.2px;width:43.4px;height:43.6px;border-radius:11px;border:3.4px solid #4b5563;background:#111827;box-sizing:border-box"></div>
<svg style="position:absolute;left:1112.0px;top:868.8px" width="36" height="36" viewBox="-18 -18 36 36" fill="none" stroke="#dc2626" stroke-width="2.35" stroke-linecap="round"><circle cx="0" cy="0" r="12.7"/><line x1="-5.1" y1="-5.1" x2="5.1" y2="5.1"/><line x1="5.1" y1="-5.1" x2="-5.1" y2="5.1"/></svg>
<div style="position:absolute;left:2650.7px;top:874.70px;width:6.8px;height:6.8px;border-radius:3.4px;background:#e5e7eb"></div>
<div style="position:absolute;left:2650.7px;top:885.80px;width:6.8px;height:6.8px;border-radius:3.4px;background:#e5e7eb"></div>
<div style="position:absolute;left:2650.7px;top:896.90px;width:6.8px;height:6.8px;border-radius:3.4px;background:#e5e7eb"></div>
<div style="position:absolute;left:72.3px;top:962.2px;width:43.4px;height:43.6px;border-radius:11px;border:3.4px solid #4b5563;background:#111827;box-sizing:border-box"></div>
<svg style="position:absolute;left:1112.0px;top:963.6px" width="36" height="36" viewBox="-18 -18 36 36" fill="none" stroke="#179e2e" stroke-width="2.35" stroke-linecap="round" stroke-linejoin="round"><path d="M12.45,-2.2 A12.65,12.65 0 1 1 6.3,-10.95"/><polyline points="-7.2,-1.1 -2.3,4.3 11.6,-10.4"/></svg>
<div style="position:absolute;left:2650.7px;top:968.70px;width:6.8px;height:6.8px;border-radius:3.4px;background:#e5e7eb"></div>
<div style="position:absolute;left:2650.7px;top:979.80px;width:6.8px;height:6.8px;border-radius:3.4px;background:#e5e7eb"></div>
<div style="position:absolute;left:2650.7px;top:990.90px;width:6.8px;height:6.8px;border-radius:3.4px;background:#e5e7eb"></div>
<div style="position:absolute;left:72.3px;top:1056.2px;width:43.4px;height:43.6px;border-radius:11px;border:3.4px solid #4b5563;background:#111827;box-sizing:border-box"></div>
<svg style="position:absolute;left:1112.0px;top:1057.6px" width="36" height="36" viewBox="-18 -18 36 36" fill="none" stroke="#179e2e" stroke-width="2.35" stroke-linecap="round" stroke-linejoin="round"><path d="M12.45,-2.2 A12.65,12.65 0 1 1 6.3,-10.95"/><polyline points="-7.2,-1.1 -2.3,4.3 11.6,-10.4"/></svg>
<div style="position:absolute;left:2650.7px;top:1062.70px;width:6.8px;height:6.8px;border-radius:3.4px;background:#e5e7eb"></div>
<div style="position:absolute;left:2650.7px;top:1073.80px;width:6.8px;height:6.8px;border-radius:3.4px;background:#e5e7eb"></div>
<div style="position:absolute;left:2650.7px;top:1084.90px;width:6.8px;height:6.8px;border-radius:3.4px;background:#e5e7eb"></div>
<div style="position:absolute;left:72.3px;top:1150.2px;width:43.4px;height:43.6px;border-radius:11px;border:3.4px solid #4b5563;background:#111827;box-sizing:border-box"></div>
<svg style="position:absolute;left:1112.0px;top:1150.8px" width="36" height="36" viewBox="-18 -18 36 36" fill="none" stroke="#dc2626" stroke-width="2.35" stroke-linecap="round"><circle cx="0" cy="0" r="12.7"/><line x1="-5.1" y1="-5.1" x2="5.1" y2="5.1"/><line x1="5.1" y1="-5.1" x2="-5.1" y2="5.1"/></svg>
<div style="position:absolute;left:2650.7px;top:1156.70px;width:6.8px;height:6.8px;border-radius:3.4px;background:#e5e7eb"></div>
<div style="position:absolute;left:2650.7px;top:1167.80px;width:6.8px;height:6.8px;border-radius:3.4px;background:#e5e7eb"></div>
<div style="position:absolute;left:2650.7px;top:1178.90px;width:6.8px;height:6.8px;border-radius:3.4px;background:#e5e7eb"></div>
<div style="position:absolute;left:72.3px;top:1244.2px;width:43.4px;height:43.6px;border-radius:11px;border:3.4px solid #4b5563;background:#111827;box-sizing:border-box"></div>
<svg style="position:absolute;left:1112.0px;top:1245.6px" width="36" height="36" viewBox="-18 -18 36 36" fill="none" stroke="#179e2e" stroke-width="2.35" stroke-linecap="round" stroke-linejoin="round"><path d="M12.45,-2.2 A12.65,12.65 0 1 1 6.3,-10.95"/><polyline points="-7.2,-1.1 -2.3,4.3 11.6,-10.4"/></svg>
<div style="position:absolute;left:2650.7px;top:1250.70px;width:6.8px;height:6.8px;border-radius:3.4px;background:#e5e7eb"></div>
<div style="position:absolute;left:2650.7px;top:1261.80px;width:6.8px;height:6.8px;border-radius:3.4px;background:#e5e7eb"></div>
<div style="position:absolute;left:2650.7px;top:1272.90px;width:6.8px;height:6.8px;border-radius:3.4px;background:#e5e7eb"></div>
<div style="position:absolute;left:1206px;top:1351.7px;width:84px;height:84px;border-radius:42px;background:#334155"></div>
<svg style="position:absolute;left:859.8px;top:1374px" width="40" height="40" viewBox="859.8 1374 40 40" fill="none" stroke="#9ca3af" stroke-width="2.6" stroke-linecap="round" stroke-linejoin="round"><polyline points="878.4,1385.8 869.9999999999999,1394.2 878.4,1402.6"/><polyline points="889.6,1385.8 881.1999999999999,1394.2 889.6,1402.6"/></svg>
<svg style="position:absolute;left:952px;top:1374px" width="40" height="40" viewBox="952 1374 40 40" fill="none" stroke="#9ca3af" stroke-width="2.6" stroke-linecap="round" stroke-linejoin="round"><polyline points="976.2,1385.8 967.8,1394.2 976.2,1402.6"/></svg>
<svg style="position:absolute;left:1503.9px;top:1374px" width="40" height="40" viewBox="1503.9 1374 40 40" fill="none" stroke="#9ca3af" stroke-width="2.6" stroke-linecap="round" stroke-linejoin="round"><polyline points="1519.7,1385.8 1528.1000000000001,1394.2 1519.7,1402.6"/></svg>
<svg style="position:absolute;left:1595.9px;top:1374px" width="40" height="40" viewBox="1595.9 1374 40 40" fill="none" stroke="#9ca3af" stroke-width="2.6" stroke-linecap="round" stroke-linejoin="round"><polyline points="1606.1000000000001,1385.8 1614.5000000000002,1394.2 1606.1000000000001,1402.6"/><polyline points="1617.3,1385.8 1625.7,1394.2 1617.3,1402.6"/></svg>
<div class="t" style="left:43.80px;top:88.19px;font-size:16.2px;font-weight:400;color:#ffffff;transform:scaleX(1.0662);letter-spacing:1.1px;-webkit-text-stroke:0.45px #ffffff;">A Freshworks Company</div>
<div class="t" style="left:287.82px;top:51.83px;font-size:33.4px;font-weight:400;color:#e8eaee;transform:scaleX(1.0177);-webkit-text-stroke:0.4px;">Infrastructure</div>
<div class="t" style="left:559.25px;top:51.83px;font-size:33.4px;font-weight:400;color:#e8eaee;transform:scaleX(0.9272);-webkit-text-stroke:0.4px;">Resources</div>
<div class="t" style="left:778.57px;top:51.83px;font-size:33.4px;font-weight:400;color:#e8eaee;transform:scaleX(1.0088);-webkit-text-stroke:0.4px;">Applications</div>
<div class="t" style="left:1030.36px;top:51.83px;font-size:33.4px;font-weight:400;color:#e8eaee;transform:scaleX(0.9586);-webkit-text-stroke:0.4px;">Discovery</div>
<div class="t" style="left:1243.28px;top:51.83px;font-size:33.4px;font-weight:400;color:#e8eaee;transform:scaleX(0.9769);-webkit-text-stroke:0.4px;">Analytics</div>
<div class="t" style="left:1445.26px;top:51.83px;font-size:33.4px;font-weight:400;color:#e8eaee;transform:scaleX(0.9921);-webkit-text-stroke:0.4px;">Tools</div>
<div class="t" style="left:1592.52px;top:51.83px;font-size:33.4px;font-weight:400;color:#e8eaee;transform:scaleX(0.9842);-webkit-text-stroke:0.4px;">Insights+</div>
<div class="t" style="left:40.35px;top:183.05px;font-size:31.6px;font-weight:400;color:#8d97a6;transform:scaleX(0.9316);-webkit-text-stroke:0.35px;">Devices</div>
<div class="t" style="left:42.61px;top:242.37px;font-size:72.8px;font-weight:700;color:#eceef2;transform:scaleX(0.9616);-webkit-text-stroke:2.6px #eceef2;">Devices</div>
<div class="t" style="left:2231.80px;top:238.04px;font-size:29.6px;font-weight:700;color:#0b0f17;transform:scaleX(0.9622);">Create</div>
<div class="t" style="left:2405.55px;top:238.04px;font-size:29.6px;font-weight:700;color:#1d2128;transform:scaleX(0.9186);">Clone</div>
<div class="t" style="left:2565.97px;top:238.04px;font-size:29.6px;font-weight:700;color:#60a5fa;transform:scaleX(0.9138);">Report</div>
<div class="t" style="left:113.73px;top:395.24px;font-size:31.5px;font-weight:400;color:#9ca3af;transform:scaleX(0.9255);-webkit-text-stroke:0.4px;">Search by name, aliases</div>
<div class="t" style="left:586.88px;top:394.34px;font-size:31.5px;font-weight:400;color:#4b5563;transform:scaleX(0.9647);-webkit-text-stroke:0.4px;">Actions</div>
<div class="t" style="left:1502.43px;top:394.07px;font-size:30.4px;font-weight:400;color:#a3a7ae;transform:scaleX(0.9080);-webkit-text-stroke:0.4px;">Type</div>
<div class="t" style="left:1677.71px;top:394.07px;font-size:30.4px;font-weight:400;color:#a3a7ae;transform:scaleX(0.9159);-webkit-text-stroke:0.4px;">Hardware</div>
<div class="t" style="left:1914.31px;top:394.07px;font-size:30.4px;font-weight:400;color:#a3a7ae;transform:scaleX(0.9248);-webkit-text-stroke:0.4px;">Customers</div>
<div class="t" style="left:2166.24px;top:394.07px;font-size:30.4px;font-weight:400;color:#a3a7ae;transform:scaleX(0.9027);-webkit-text-stroke:0.4px;">More Filters</div>
<div class="t" style="left:2440.01px;top:392.57px;font-size:29.8px;font-weight:700;color:#1b1f26;transform:scaleX(0.9168);">Advanced</div>
<div class="t" style="left:41.25px;top:488.10px;font-size:30.6px;font-weight:700;color:#9ca3af;">0</div>
<div class="t" style="left:67.50px;top:488.10px;font-size:30.6px;font-weight:400;color:#9ca3af;transform:scaleX(0.9980);-webkit-text-stroke:0.35px;">items selected</div>
<div class="t" style="left:139.15px;top:594.97px;font-size:30.4px;font-weight:700;color:#e5e7eb;transform:scaleX(0.9266);">Name</div>
<div class="t" style="left:689.66px;top:594.97px;font-size:30.4px;font-weight:700;color:#e5e7eb;transform:scaleX(0.8996);">Type</div>
<div class="t" style="left:855.23px;top:594.97px;font-size:30.4px;font-weight:700;color:#e5e7eb;transform:scaleX(0.8790);">Service Level</div>
<div class="t" style="left:1115.26px;top:594.97px;font-size:30.4px;font-weight:700;color:#e5e7eb;transform:scaleX(0.8683);">In Service</div>
<div class="t" style="left:1331.92px;top:594.97px;font-size:30.4px;font-weight:700;color:#e5e7eb;transform:scaleX(0.9087);">Asset #</div>
<div class="t" style="left:1521.52px;top:594.97px;font-size:30.4px;font-weight:700;color:#e5e7eb;transform:scaleX(0.8947);">Serial #</div>
<div class="t" style="left:1751.19px;top:594.97px;font-size:30.4px;font-weight:700;color:#e5e7eb;transform:scaleX(0.9049);">Hardware</div>
<div class="t" style="left:2015.64px;top:594.97px;font-size:30.4px;font-weight:700;color:#e5e7eb;transform:scaleX(0.9277);">OS</div>
<div class="t" style="left:2147.38px;top:594.97px;font-size:30.4px;font-weight:700;color:#e5e7eb;transform:scaleX(0.8942);">Customers</div>
<div class="t" style="left:2407.22px;top:594.97px;font-size:30.4px;font-weight:700;color:#e5e7eb;transform:scaleX(0.8922);">Location</div>
<div class="t" style="left:139.65px;top:689.68px;font-size:29.2px;font-weight:400;color:#0a9be3;transform:scaleX(0.9490);-webkit-text-stroke:0.35px;">D42-Build-ProdBackup</div>
<div class="t" style="left:690.18px;top:689.68px;font-size:29.2px;font-weight:400;color:#e5e7eb;transform:scaleX(0.9845);-webkit-text-stroke:0.35px;">virtual</div>
<div class="t" style="left:854.50px;top:689.68px;font-size:29.2px;font-weight:400;color:#e5e7eb;transform:scaleX(0.9703);-webkit-text-stroke:0.35px;">Production</div>
<div class="t" style="left:139.67px;top:782.18px;font-size:29.2px;font-weight:400;color:#0a9be3;transform:scaleX(0.9378);-webkit-text-stroke:0.35px;">D42 Cluster</div>
<div class="t" style="left:689.08px;top:782.18px;font-size:29.2px;font-weight:400;color:#e5e7eb;transform:scaleX(0.9754);-webkit-text-stroke:0.35px;">cluster</div>
<div class="t" style="left:854.50px;top:782.18px;font-size:29.2px;font-weight:400;color:#e5e7eb;transform:scaleX(0.9703);-webkit-text-stroke:0.35px;">Production</div>
<div class="t" style="left:139.65px;top:876.28px;font-size:29.2px;font-weight:400;color:#0a9be3;transform:scaleX(0.9477);-webkit-text-stroke:0.35px;">D42Demo</div>
<div class="t" style="left:690.18px;top:876.28px;font-size:29.2px;font-weight:400;color:#e5e7eb;transform:scaleX(0.9845);-webkit-text-stroke:0.35px;">virtual</div>
<div class="t" style="left:854.50px;top:876.28px;font-size:29.2px;font-weight:400;color:#e5e7eb;transform:scaleX(0.9703);-webkit-text-stroke:0.35px;">Production</div>
<div class="t" style="left:2406.60px;top:876.28px;font-size:29.2px;font-weight:400;color:#e5e7eb;transform:scaleX(1.0407);-webkit-text-stroke:0.35px;">esxi-90-0-5</div>
<div class="t" style="left:139.76px;top:970.28px;font-size:29.2px;font-weight:400;color:#0a9be3;transform:scaleX(0.9026);-webkit-text-stroke:0.35px;">D42DEMODEVICE4</div>
<div class="t" style="left:688.52px;top:970.28px;font-size:29.2px;font-weight:400;color:#e5e7eb;transform:scaleX(0.9484);-webkit-text-stroke:0.35px;">physical</div>
<div class="t" style="left:854.50px;top:970.28px;font-size:29.2px;font-weight:400;color:#e5e7eb;transform:scaleX(0.9703);-webkit-text-stroke:0.35px;">Production</div>
<div class="t" style="left:1331.10px;top:970.28px;font-size:29.2px;font-weight:400;color:#e5e7eb;transform:scaleX(1.0635);-webkit-text-stroke:0.35px;">0046</div>
<div class="t" style="left:1521.35px;top:970.28px;font-size:29.2px;font-weight:400;color:#e5e7eb;transform:scaleX(0.9084);-webkit-text-stroke:0.35px;">93265147</div>
<div class="t" style="left:1751.09px;top:970.28px;font-size:29.2px;font-weight:400;color:#0a9be3;transform:scaleX(0.8904);-webkit-text-stroke:0.35px;">PowerEdge R710</div>
<div class="t" style="left:139.75px;top:1064.28px;font-size:29.2px;font-weight:400;color:#0a9be3;transform:scaleX(0.9047);-webkit-text-stroke:0.35px;">D42DEMODEVICE7</div>
<div class="t" style="left:688.52px;top:1064.28px;font-size:29.2px;font-weight:400;color:#e5e7eb;transform:scaleX(0.9484);-webkit-text-stroke:0.35px;">physical</div>
<div class="t" style="left:854.50px;top:1064.28px;font-size:29.2px;font-weight:400;color:#e5e7eb;transform:scaleX(0.9703);-webkit-text-stroke:0.35px;">Production</div>
<div class="t" style="left:1331.10px;top:1064.28px;font-size:29.2px;font-weight:400;color:#e5e7eb;transform:scaleX(1.0656);-webkit-text-stroke:0.35px;">0049</div>
<div class="t" style="left:1521.24px;top:1064.28px;font-size:29.2px;font-weight:400;color:#e5e7eb;transform:scaleX(0.9061);-webkit-text-stroke:0.35px;">25487961</div>
<div class="t" style="left:1751.02px;top:1064.28px;font-size:29.2px;font-weight:400;color:#0a9be3;transform:scaleX(0.9172);-webkit-text-stroke:0.35px;">ProLiant DL380...</div>
<div class="t" style="left:139.70px;top:1158.28px;font-size:29.2px;font-weight:400;color:#0a9be3;transform:scaleX(0.9274);-webkit-text-stroke:0.35px;">D42DemoRC</div>
<div class="t" style="left:690.18px;top:1158.28px;font-size:29.2px;font-weight:400;color:#e5e7eb;transform:scaleX(0.9845);-webkit-text-stroke:0.35px;">virtual</div>
<div class="t" style="left:854.50px;top:1158.28px;font-size:29.2px;font-weight:400;color:#e5e7eb;transform:scaleX(0.9703);-webkit-text-stroke:0.35px;">Production</div>
<div class="t" style="left:2406.60px;top:1158.28px;font-size:29.2px;font-weight:400;color:#e5e7eb;transform:scaleX(1.0407);-webkit-text-stroke:0.35px;">esxi-90-0-5</div>
<div class="t" style="left:140.69px;top:1252.28px;font-size:29.2px;font-weight:400;color:#0a9be3;transform:scaleX(0.9701);-webkit-text-stroke:0.35px;">d42-equallogic-01</div>
<div class="t" style="left:688.52px;top:1252.28px;font-size:29.2px;font-weight:400;color:#e5e7eb;transform:scaleX(0.9484);-webkit-text-stroke:0.35px;">physical</div>
<div class="t" style="left:854.50px;top:1252.28px;font-size:29.2px;font-weight:400;color:#e5e7eb;transform:scaleX(0.9703);-webkit-text-stroke:0.35px;">Production</div>
<div class="t" style="left:1521.15px;top:1252.28px;font-size:29.2px;font-weight:400;color:#e5e7eb;transform:scaleX(0.9638);-webkit-text-stroke:0.35px;">CN-0WK7G...</div>
<div class="t" style="left:1751.14px;top:1252.28px;font-size:29.2px;font-weight:400;color:#0a9be3;transform:scaleX(0.8676);-webkit-text-stroke:0.35px;">PS6210</div>
<div class="t" style="left:1055.34px;top:1379.26px;font-size:31px;font-weight:400;color:#9ca3af;-webkit-text-stroke:0.35px;">1</div>
<div class="t" style="left:1147.17px;top:1379.26px;font-size:31px;font-weight:400;color:#9ca3af;-webkit-text-stroke:0.35px;">2</div>
<div class="t" style="left:1239.30px;top:1379.26px;font-size:31px;font-weight:400;color:#e5e7eb;-webkit-text-stroke:0.35px;">3</div>
<div class="t" style="left:1331.24px;top:1379.26px;font-size:31px;font-weight:400;color:#9ca3af;-webkit-text-stroke:0.35px;">4</div>
<div class="t" style="left:1423.38px;top:1379.26px;font-size:31px;font-weight:400;color:#9ca3af;-webkit-text-stroke:0.35px;">5</div>
<div class="t" style="left:2440.57px;top:1379.74px;font-size:30.2px;font-weight:400;color:#9ca3af;transform:scaleX(1.0139);-webkit-text-stroke:0.35px;">Total</div>
<div class="t" style="left:2511.62px;top:1379.74px;font-size:30.2px;font-weight:700;color:#9ca3af;">1168</div>
<div class="t" style="left:2584.04px;top:1379.74px;font-size:30.2px;font-weight:400;color:#9ca3af;transform:scaleX(0.9856);-webkit-text-stroke:0.35px;">Devices</div>
</body></html>
